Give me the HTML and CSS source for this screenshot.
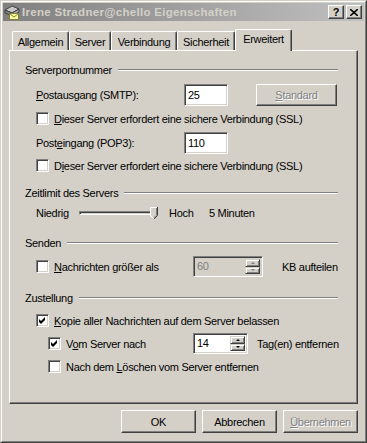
FILE: index.html
```html
<!DOCTYPE html>
<html lang="de">
<head>
<meta charset="utf-8">
<title>Irene Stradner@chello Eigenschaften</title>
<link rel="stylesheet" href="styles.css">
</head>
<body>
<div class="window">
  <div class="frame">
    <div class="titlebar">
      <svg class="appicon" width="16" height="16" viewBox="0 0 16 16">
        <polygon points="1,6 8,2 15,5 8,9" fill="#c8c8c8" stroke="#404040" stroke-width="1"/>
        <polygon points="1,6 8,9 8,12 1,9" fill="#808080" stroke="#404040" stroke-width="1"/>
        <polygon points="8,9 15,5 15,8 8,12" fill="#a8a8a8" stroke="#404040" stroke-width="1"/>
        <rect x="5.5" y="9.5" width="9" height="6" fill="#ffff9c" stroke="#808040"/>
        <path d="M5.5 9.5 L10 13 L14.5 9.5" fill="none" stroke="#808040"/>
      </svg>
      <span class="title">Irene Stradner@chello Eigenschaften</span>
      <div class="capbtns">
        <span class="capbtn">?</span>
        <span class="capbtn">
          <svg width="8" height="7" viewBox="0 0 8 7"><path d="M0 0 L8 7 M8 0 L0 7" stroke="#000" stroke-width="1.6"/></svg>
        </span>
      </div>
    </div>

    <div class="client">
      <div class="tabs">
        <div class="tab w-allg">Allgemein</div>
        <div class="tab w-serv">Server</div>
        <div class="tab w-verb">Verbindung</div>
        <div class="tab w-sich">Sicherheit</div>
        <div class="tab active w-erw">Erweitert</div>
      </div>

      <div class="panel">
        <div class="ghead first"><span>Serverportnummer</span><i class="rule"></i></div>

        <div class="row port mt7">
          <span class="plabel"><u>P</u>ostausgang (SMTP):</span>
          <div class="edit">25</div>
          <div class="btn std disabled"><span><u>S</u>tandard</span></div>
        </div>
        <div class="row chk mt6">
          <span class="cb"></span><span><u>D</u>ieser Server erfordert eine sichere Verbindung (SSL)</span>
        </div>
        <div class="row port mt7">
          <span class="plabel">Post<u>e</u>ingang (POP3):</span>
          <div class="edit">110</div>
        </div>
        <div class="row chk mt5">
          <span class="cb"></span><span>D<u>i</u>eser Server erfordert eine sichere Verbindung (SSL)</span>
        </div>

        <div class="ghead mt14"><span>Zeitlimit des Servers</span><i class="rule"></i></div>
        <div class="row slider-row mt6">
          <span class="s-lo">Niedrig</span>
          <div class="track">
            <i class="channel"></i>
            <svg class="thumb" width="8" height="12" viewBox="0 0 8 12">
              <polygon points="0.5,0.5 7.5,0.5 7.5,8.5 4,11.5 0.5,8.5" fill="#d4d0c8"/>
              <path d="M0.5 9 L0.5 0.5 L7 0.5" fill="none" stroke="#fff"/>
              <path d="M7.5 0 L7.5 8.5 L4 12" fill="none" stroke="#404040"/>
              <path d="M6.5 1 L6.5 8.2 L4 10.8" fill="none" stroke="#808080"/>
              <path d="M0.5 8.6 L3.2 11.2" fill="none" stroke="#fff"/>
            </svg>
          </div>
          <span class="s-hi">Hoch</span>
          <span>5 Minuten</span>
        </div>

        <div class="ghead mt16"><span>Senden</span><i class="rule"></i></div>
        <div class="row spinrow mt6">
          <div class="cblabel w157"><span class="cb"></span><span><u>N</u>achrichten größer als</span></div>
          <div class="spin disabled w70">
            <span class="val">60</span>
            <div class="arrows"><span class="ab"><i class="up"></i></span><span class="ab"><i class="dn"></i></span></div>
          </div>
          <span class="after19">KB aufteilen</span>
        </div>

        <div class="ghead mt14"><span>Zustellung</span><i class="rule"></i></div>
        <div class="row chk mt9">
          <span class="cb checked">
            <svg width="7" height="7" viewBox="0 0 7 7"><polygon points="0,2 2,4 6,0 6,3 2,7 0,5" fill="#000"/></svg>
          </span><span><u>K</u>opie aller Nachrichten auf dem Server belassen</span>
        </div>
        <div class="row spinrow indent mt6">
          <div class="cblabel w145"><span class="cb checked">
            <svg width="7" height="7" viewBox="0 0 7 7"><polygon points="0,2 2,4 6,0 6,3 2,7 0,5" fill="#000"/></svg>
          </span><span>V<u>o</u>m Server nach</span></div>
          <div class="spin w55">
            <span class="val">14</span>
            <div class="arrows"><span class="ab"><i class="up"></i></span><span class="ab"><i class="dn"></i></span></div>
          </div>
          <span class="after9">Tag(en) entfernen</span>
        </div>
        <div class="row chk indent mt6">
          <span class="cb"></span><span>Nach dem <u>L</u>öschen vom Server entfernen</span>
        </div>
      </div>

      <div class="buttons">
        <div class="btn"><span>OK</span></div>
        <div class="btn"><span>Abbrechen</span></div>
        <div class="btn disabled"><span><u>Ü</u>bernehmen</span></div>
      </div>
    </div>
  </div>
</div>
</body>
</html>
```

FILE: styles.css
```css
* { box-sizing: border-box; }
html, body { margin: 0; padding: 0; }
body {
  width: 367px;
  height: 443px;
  overflow: hidden;
  background: #d4d0c8;
  font-family: "Liberation Sans", Arial, sans-serif;
  font-size: 11px;
  letter-spacing: -0.3px;
  color: #000;
}
u { text-decoration: underline; text-underline-offset: 1px; }

.window {
  width: 367px;
  height: 443px;
  border: 1px solid;
  border-color: #d4d0c8 #404040 #404040 #d4d0c8;
}
.frame {
  height: 100%;
  border: 1px solid;
  border-color: #fff #808080 #808080 #fff;
  padding: 1px;
  display: flex;
  flex-direction: column;
}

/* title bar */
.titlebar {
  height: 18px;
  flex: none;
  display: flex;
  align-items: center;
  padding-left: 1px;
  background: linear-gradient(to right, #808080, #c0c0c0);
}
.appicon { flex: none; }
.title {
  margin-left: 2px;
  font-weight: bold;
  font-size: 11.5px;
  color: #d4d0c8;
  letter-spacing: 0.3px;
  white-space: nowrap;
}
.capbtns {
  margin-left: auto;
  margin-right: 2px;
  display: flex;
  gap: 2px;
}
.capbtn {
  width: 16px;
  height: 14px;
  display: flex;
  align-items: center;
  justify-content: center;
  background: #d4d0c8;
  border: 1px solid;
  border-color: #fff #404040 #404040 #fff;
  box-shadow: inset -1px -1px #808080;
  font-weight: bold;
  font-size: 11px;
  line-height: 1;
  letter-spacing: 0;
}

/* client */
.client {
  flex: 1;
  padding: 8px 0 0 6px;
  display: flex;
  flex-direction: column;
}
.tabs {
  height: 21px;
  display: flex;
  align-items: flex-start;
  padding-left: 3px;
}
.tab {
  margin-top: 2px;
  height: 19px;
  border-top: 1px solid #fff;
  border-left: 1px solid #fff;
  border-right: 1px solid #404040;
  box-shadow: inset -1px 0 #808080;
  border-radius: 2px 2px 0 0;
  text-align: center;
  line-height: 18px;
  padding-top: 1px;
  white-space: nowrap;
}
.tab.active {
  margin-top: 0;
  height: 22px;
  position: relative;
  z-index: 1;
  background: #d4d0c8;
  line-height: 18px;
  padding-top: 0;
}
.w-allg { width: 57px; }
.w-serv { width: 42px; }
.w-verb { width: 66px; }
.w-sich { width: 58px; }
.w-erw { width: 57px; }

.panel {
  width: 349px;
  height: 354px;
  border: 1px solid;
  border-color: #fff #404040 #404040 #fff;
  box-shadow: inset -1px -1px #808080;
  padding: 12px 19px 0 15px;
  display: flex;
  flex-direction: column;
}

.ghead {
  height: 14px;
  display: flex;
  align-items: center;
  line-height: 14px;
  white-space: nowrap;
}
.rule {
  flex: 1;
  height: 2px;
  margin-left: 6px;
  border-top: 1px solid #808080;
  border-bottom: 1px solid #fff;
}

.mt5 { margin-top: 5px; }
.mt6 { margin-top: 6px; }
.mt7 { margin-top: 7px; }
.mt9 { margin-top: 9px; }
.mt14 { margin-top: 14px; }
.mt16 { margin-top: 16px; }

.row {
  display: flex;
  align-items: center;
  padding-left: 11px;
  white-space: nowrap;
}
.row.indent { padding-left: 23px; }
.row.port { height: 22px; }
.row.chk { height: 13px; }
.row.slider-row { height: 14px; }
.row.spinrow { height: 21px; }

.plabel { width: 148px; flex: none; }
.edit {
  width: 44px;
  height: 22px;
  background: #fff;
  border: 1px solid;
  border-color: #808080 #fff #fff #808080;
  box-shadow: inset 1px 1px #404040, inset -1px -1px #d4d0c8;
  padding: 0 3px;
  line-height: 20px;
}

.btn {
  width: 75px;
  height: 23px;
  flex: none;
  display: flex;
  align-items: center;
  justify-content: center;
  border: 1px solid;
  border-color: #fff #404040 #404040 #fff;
  box-shadow: inset -1px -1px #808080;
  background: #d4d0c8;
}
.btn.std { width: 81px; height: 22px; margin-left: 28px; }
.disabled { color: #808080; text-shadow: 1px 1px 0 #fff; }

/* checkbox */
.cb {
  width: 13px;
  height: 13px;
  flex: none;
  margin-right: 5px;
  background: #fff;
  border: 1px solid;
  border-color: #808080 #fff #fff #808080;
  box-shadow: inset 1px 1px #404040, inset -1px -1px #d4d0c8;
  display: flex;
  align-items: center;
  justify-content: center;
}
.cb svg { display: block; }
.cblabel { display: flex; align-items: center; flex: none; }
.w157 { width: 157px; }
.w145 { width: 145px; }

/* slider */
.s-lo { width: 43px; flex: none; }
.track {
  width: 79px;
  height: 14px;
  flex: none;
  display: flex;
  align-items: center;
  position: relative;
}
.channel {
  display: block;
  width: 100%;
  height: 4px;
  border: 1px solid;
  border-color: #808080 #fff #fff #808080;
  box-shadow: inset 1px 1px #404040;
  background: #d4d0c8;
}
.thumb {
  position: absolute;
  left: 71px;
  top: 1px;
}
.s-hi { margin-left: 11px; width: 40px; flex: none; }

/* spin */
.spin {
  height: 21px;
  flex: none;
  display: flex;
  background: #fff;
  border: 1px solid;
  border-color: #808080 #fff #fff #808080;
  box-shadow: inset 1px 1px #404040, inset -1px -1px #d4d0c8;
  padding: 2px 2px 2px 2px;
}
.spin.disabled { background: #d4d0c8; text-shadow: none; }
.w70 { width: 70px; }
.w55 { width: 55px; }
.spin .val { flex: 1; line-height: 15px; padding-left: 1px; }
.arrows {
  width: 15px;
  display: flex;
  flex-direction: column;
}
.ab {
  flex: 1;
  display: flex;
  align-items: center;
  justify-content: center;
  border: 1px solid;
  border-color: #d4d0c8 #404040 #404040 #d4d0c8;
  box-shadow: inset 1px 1px #fff, inset -1px -1px #808080;
  background: #d4d0c8;
}
.ab i { display: block; width: 0; height: 0; border-left: 2px solid transparent; border-right: 2px solid transparent; }
.ab .up { border-bottom: 2px solid #000; }
.ab .dn { border-top: 2px solid #000; }
.spin.disabled .ab .up { border-bottom-color: #808080; }
.spin.disabled .ab .dn { border-top-color: #808080; }
.spin.disabled .val { color: #808080; }
.after19 { margin-left: 19px; }
.after9 { margin-left: 9px; }

/* bottom buttons */
.buttons {
  width: 349px;
  margin-top: 6px;
  display: flex;
  justify-content: flex-end;
  gap: 6px;
}
```
